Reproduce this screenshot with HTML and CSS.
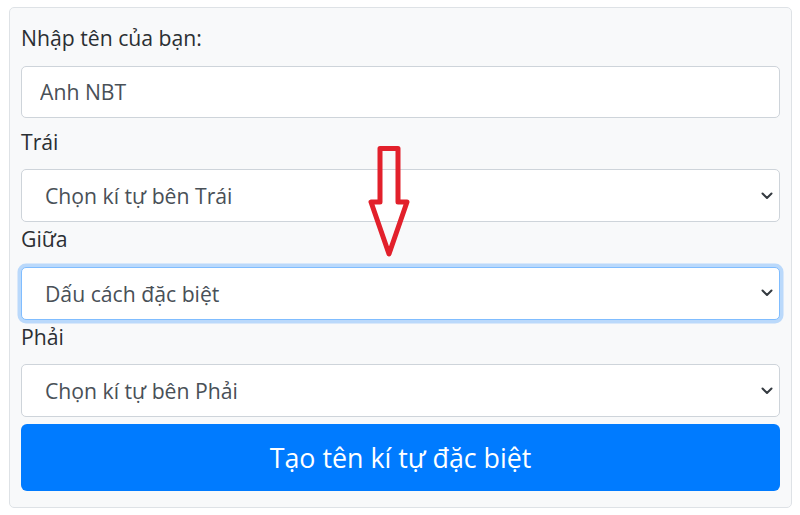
FILE: index.html
```html
<!DOCTYPE html>
<html lang="vi">
<head>
<meta charset="utf-8">
<title>Tạo tên kí tự đặc biệt</title>
<link rel="stylesheet" href="styles.css">
</head>
<body>
<form class="card">
  <label class="label" for="name">Nhập tên của bạn:</label>
  <input class="field input" id="name" type="text" value="Anh NBT">

  <label class="label" for="left">Trái</label>
  <div class="select-wrap">
    <select class="field select" id="left"><option>Chọn kí tự bên Trái</option></select>
    <svg class="chev" viewBox="0 0 12 8" width="12" height="8"><path d="M1.5 1.5 6 6l4.5-4.5"/></svg>
  </div>

  <label class="label" for="mid">Giữa</label>
  <div class="select-wrap">
    <select class="field select is-focused" id="mid"><option>Dấu cách đặc biệt</option></select>
    <svg class="chev" viewBox="0 0 12 8" width="12" height="8"><path d="M1.5 1.5 6 6l4.5-4.5"/></svg>
  </div>

  <label class="label" for="right">Phải</label>
  <div class="select-wrap">
    <select class="field select" id="right"><option>Chọn kí tự bên Phải</option></select>
    <svg class="chev" viewBox="0 0 12 8" width="12" height="8"><path d="M1.5 1.5 6 6l4.5-4.5"/></svg>
  </div>

  <button class="btn" type="button">Tạo tên kí tự đặc biệt</button>

  <svg class="arrow" viewBox="0 0 50 126" width="50" height="126"><polygon points="15,8.5 33,8.5 33,62 42,62 24,114 6,62 15,62"/></svg>
</form>
</body>
</html>
```

FILE: styles.css
```css
* { box-sizing: border-box; }

body {
  margin: 7px 8px 0 9px;
  background: #ffffff;
  font-family: "Open Sans", "Noto Sans", sans-serif;
  color: #212529;
}

.card {
  position: relative;
  display: flex;
  flex-direction: column;
  background: #f8f9fa;
  border: 1px solid #dee2e6;
  border-radius: 5px;
  padding: 13px 11px 16px 11px;
}

.label {
  display: block;
  font-size: 21.2px;
  line-height: 33px;
  margin-bottom: 11.5px;
  color: #2b2f33;
}

.field {
  display: block;
  width: 100%;
  height: 53px;
  margin: 0;
  border: 1px solid #ced4da;
  border-radius: 5px;
  background: #ffffff;
  font-family: inherit;
  font-size: 21.2px;
  color: #495057;
  padding: 0 18px;
  outline: none;
}

.input {
  height: 52px;
  margin-bottom: 7px;
}

.select-wrap {
  position: relative;
}

.select {
  appearance: none;
  -webkit-appearance: none;
  padding-left: 23px;
  padding-right: 40px;
}

.select.is-focused {
  border-color: #80bdff;
  box-shadow: 0 0 0 3.5px rgba(0, 123, 255, 0.25);
}

.chev {
  position: absolute;
  right: 7px;
  top: 50%;
  margin-top: -4px;
  fill: none;
  stroke: #343a40;
  stroke-width: 2;
  stroke-linecap: round;
  stroke-linejoin: round;
}

.btn {
  margin-top: 7px;
  height: 67px;
  width: 100%;
  border: none;
  border-radius: 6px;
  background: #007bff;
  color: #ffffff;
  font-family: inherit;
  font-size: 26.8px;
  cursor: pointer;
}

.arrow {
  position: absolute;
  left: 355px;
  top: 132px;
  fill: none;
  stroke: #e2202b;
  stroke-width: 5;
  stroke-linejoin: round;
}
```
